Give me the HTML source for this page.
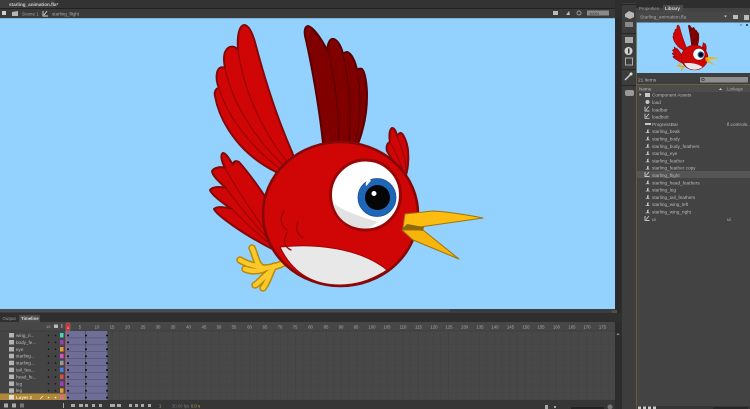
<!DOCTYPE html>
<html><head><meta charset="utf-8"><style>
html,body{margin:0;padding:0;background:#2e2e2e;width:750px;height:409px;overflow:hidden}
svg{display:block;filter:blur(.35px)}
text{font-family:"Liberation Sans",sans-serif}
</style></head><body>
<svg width="750" height="409" viewBox="0 0 750 409" xmlns="http://www.w3.org/2000/svg">
<defs>
<pattern id="tg" x="66" y="331" width="15.3" height="6.9" patternUnits="userSpaceOnUse">
<rect width="15.3" height="6.9" fill="#484848"/>
<path d="M0 0V7" stroke="#3f3f3f" stroke-width="1"/>
<path d="M7.6 0V7" stroke="#444" stroke-width="1"/>
<path d="M0 6.6H16" stroke="#444" stroke-width=".6"/>
</pattern>
</defs>

<!-- chrome -->
<rect width="750" height="409" fill="#2e2e2e"/>
<rect x="0" y="0" width="615" height="8" fill="#333"/>
<rect x="0" y="8" width="615" height="1" fill="#222"/>
<rect x="0" y="0" width="55" height="8" fill="#3d3d3d"/>
<text x="9" y="6" font-size="4.6" font-weight="bold" fill="#cfcfcf">starling_animation.fla*</text>
<rect x="0" y="9" width="615" height="9" fill="#3a3a3a"/>
<rect x="2" y="11" width="4" height="4" fill="#cfcfcf"/>
<path d="M12 16V12l6-1v5z" fill="#b5b5b5"/>
<text x="22" y="15.500" font-size="4.6" fill="#aaa">Scene 1</text>
<path d="M43 11v5h5M44 15l3-4" stroke="#ccc" stroke-width="1" fill="none"/>
<text x="52" y="15.500" font-size="4.6" fill="#aaa">starling_flight</text>
<path d="M553 11h5v4h-5z" fill="#bbb"/><path d="M566 15l3-4 1 4z" fill="#bbb"/><circle cx="579" cy="13" r="2" fill="none" stroke="#999"/>
<rect x="587" y="10.500" width="22" height="5" fill="#8a8a8a"/>
<text x="589" y="15" font-size="4" fill="#333">100%</text>

<!-- stage -->
<rect x="0" y="18" width="615" height="291" fill="#93d1ff"/>
<rect x="0" y="18" width="615" height="1" fill="#7fb5dd"/>
<rect x="0" y="309" width="615" height="4" fill="#3a3d40"/>
<rect x="0" y="309" width="450" height="3" fill="#4a4d50"/>
<rect x="615" y="18" width="6" height="295" fill="#2a2a2a"/>
<rect x="612" y="310" width="5" height="4" fill="#5a4a3a"/>

<!-- BIRD -->
<g stroke-linejoin="round" stroke-linecap="round">
<!-- dark wing -->
<path d="M308 26C304 27 304 33 306 40C311 62 319 105 323 143L358 144C364 128 367 112 367 96C367 84 365 72 362 69C360 68 358 69 357 70C355 60 351 53 347 52C345 52 344 53 343 54C341 45 336 38 332 39C329 40 328 44 327 50C321 38 313 27 308 26Z" fill="#800000" stroke="#5a0000" stroke-width="2"/>
<path d="M328 50C334 75 339 110 339 143M343 54C349 80 352 115 349 143M357 70C361 90 361 120 355 143" fill="none" stroke="#5a0000" stroke-width="1.200"/>
<!-- left wing -->
<path d="M244 25C239 26 237 36 238 50C235 46 231 46 228 48C224 51 223 58 225 68C221 66 218 68 217 73C216 78 217 84 219 88C216 88 214 92 215 96C218 113 227 130 240 145C250 156 262 165 276 172L300 176L292 152C278 120 265 80 256 46C253 34 249 25 244 25Z" fill="#d00505" stroke="#850808" stroke-width="2"/>
<path d="M238 50C243 90 265 140 298 174M225 68C232 105 262 150 294 174M219 88C228 120 258 155 288 174" fill="none" stroke="#980606" stroke-width="1.200"/>
<!-- tail -->
<path d="M223 153C220 155 221 160 225 168C220 166 214 168 212 171C212 175 218 181 226 188C220 186 212 187 210 190C211 194 222 203 232 209C226 207 217 206 214 209C216 214 240 233 278 252L266 198C258 186 248 172 239 162C235 160 233 162 233 165C230 160 226 153 223 153Z" fill="#d00505" stroke="#850808" stroke-width="2"/>
<path d="M225 168C236 188 254 215 272 240M226 188C238 205 255 225 274 245M232 209C245 222 258 235 276 249" fill="none" stroke="#980606" stroke-width="1.200"/>
<!-- crest -->
<path d="M392 128C389 130 389 137 390 142C387 143 386 147 387 151L404 180C408 172 409 160 408 150C407 142 403 132 400 133C398 134 398 135 397 136C396 131 394 128 392 128Z" fill="#d00505" stroke="#850808" stroke-width="2"/>
<path d="M390 142C396 152 401 164 404 175M397 136C402 148 406 160 406 170" fill="none" stroke="#980606" stroke-width="1.100"/>
<!-- foot -->
<g fill="none">
<g stroke="#b88a08" stroke-width="7.500">
<path d="M286 262C277 267 268 268 262 268"/>
<path d="M262 268C256 264 256 256 252 248"/>
<path d="M260 266C252 266 245 263 240 260"/>
<path d="M264 269C256 272 250 271 245 269"/>
<path d="M274 266C270 272 268 282 263 288"/>
<path d="M270 272C264 276 258 284 255 285"/>
</g>
<g stroke="#fcc92a" stroke-width="4.500">
<path d="M286 262C277 267 268 268 262 268"/>
<path d="M262 268C256 264 256 256 252 248"/>
<path d="M260 266C252 266 245 263 240 260"/>
<path d="M264 269C256 272 250 271 245 269"/>
<path d="M274 266C270 272 268 282 263 288"/>
<path d="M270 272C264 276 258 284 255 285"/>
</g>
</g>
<!-- body -->
<ellipse cx="340.500" cy="214" rx="77.500" ry="72" fill="#d00505" stroke="#850808" stroke-width="2.600"/>
<!-- belly -->
<path d="M280 247C315 243 360 248 387 270C372 280 356 285 340 285C312 285 292 272 280 247Z" fill="#e8e8e8" stroke="#9c0505" stroke-width="1"/>
<!-- body feather marks -->
<path d="M284 211C279 218 281 226 287 230M298 222C295 228 297 235 303 238M287 233C283 240 284 247 291 250" fill="none" stroke="#980606" stroke-width="1.300"/>
<!-- eye -->
<circle cx="365.500" cy="195" r="35" fill="#fff" stroke="#980606" stroke-width="3"/>
<path d="M333 203C345 212 362 217 378 222C372 226 368 229 363 228C348 228 336 218 333 203Z" fill="#e2e2e2"/>
<circle cx="377" cy="197.500" r="19" fill="#1e66b8" stroke="#174f94" stroke-width=".8"/>
<circle cx="377.500" cy="197.500" r="12.500" fill="#060606"/>
<circle cx="374" cy="193.500" r="2.500" fill="#fff"/>
<path d="M370 179C367 180 365 182 366 186C368 185 369 182 371 181Z" fill="#fff"/>
<!-- beak -->
<path d="M402 230L413 240L459 259L423 230Z" fill="#f6b40c" stroke="#9c7506" stroke-width="1"/>
<path d="M405 214L433 211C450 212 468 215 483 218L420 227L403 228Z" fill="#fdbd10" stroke="#9c7506" stroke-width="1"/>
<path d="M402 229L407 224C413 225 418 226 424 227L423 231C416 229 409 229 402 230Z" fill="#8e6a06"/>
</g>

<!-- icon column -->
<rect x="621" y="0" width="129" height="409" fill="#2e2e2e"/>
<rect x="622" y="3" width="14" height="406" fill="#3d3d3d"/>
<rect x="622" y="4" width="14" height="1" fill="#262626"/>
<path d="M625 14l4-3 5 2v4l-4 2-5-2z" fill="#b8b8b8"/>
<rect x="625" y="22" width="8" height="5" fill="#888"/>
<rect x="622" y="33" width="14" height="1" fill="#262626"/>
<rect x="625" y="37" width="8" height="6" fill="#aaa"/>
<circle cx="628.500" cy="51" r="4" fill="#d4d4d4"/><rect x="628" y="48.500" width="1.500" height="5" fill="#333"/>
<rect x="625.500" y="58" width="7" height="7" fill="none" stroke="#aaa"/>
<rect x="622" y="69" width="14" height="1" fill="#262626"/>
<path d="M625 80l7-7" stroke="#ccc" stroke-width="1.500"/><circle cx="631" cy="74" r="1.500" fill="#ddd"/>
<rect x="622" y="85" width="14" height="1" fill="#262626"/>
<rect x="625" y="90" width="9" height="6" rx="2" fill="#999"/>

<!-- right panel -->
<rect x="636" y="3" width="114" height="406" fill="#434343"/>
<rect x="636" y="3" width="114" height="5" fill="#2e2e2e"/>
<text x="639" y="10" font-size="4.400" fill="#999">Properties</text>
<rect x="663" y="5" width="20" height="7" fill="#4a4a4a"/>
<text x="665" y="10" font-size="4.400" font-weight="bold" fill="#ddd">Library</text>
<rect x="636" y="12" width="114" height="10" fill="#474747"/>
<text x="640" y="18.500" font-size="4.800" fill="#aaa">Starling_animation.fla</text>
<path d="M724 15.500h3l-1.500 2z" fill="#bbb"/><rect x="733" y="15" width="5" height="4" fill="#bbb"/><rect x="744" y="15" width="5" height="5" fill="#bbb"/>
<rect x="636" y="22.500" width="114" height="50.500" fill="#93d1ff"/>

<!-- mini bird -->
<g transform="translate(636 20.700) scale(.172)" stroke-linejoin="round">
<path d="M308 26C304 27 304 33 306 40C311 62 319 105 323 143L358 144C367 112 367 84 362 69L357 70C355 60 351 53 343 54C341 45 336 38 332 39C329 40 328 44 327 50C321 38 313 27 308 26Z" fill="#800000" stroke="#4d0000" stroke-width="3"/>
<path d="M244 25C239 26 237 36 238 50C231 46 223 51 225 68C218 66 215 78 219 88C214 88 214 92 215 96C218 113 227 130 240 145C250 156 262 165 276 172L300 176L292 152C278 120 265 80 256 46C253 34 249 25 244 25Z" fill="#d00505" stroke="#7a0808" stroke-width="3"/>
<path d="M223 153C220 155 221 160 225 168C220 166 214 168 212 171C212 175 218 181 226 188C220 186 212 187 210 190C211 194 222 203 232 209C226 207 217 206 214 209C216 214 240 233 278 252L266 198C258 186 248 172 239 162C235 160 233 162 233 165C230 160 226 153 223 153Z" fill="#d00505" stroke="#7a0808" stroke-width="3"/>
<path d="M392 128C389 130 389 137 390 142C387 143 386 147 387 151L404 180C408 172 409 160 408 150C407 142 403 132 400 133C398 134 398 135 397 136C396 131 394 128 392 128Z" fill="#d00505" stroke="#7a0808" stroke-width="3"/>
<path d="M286 262C277 267 268 268 262 268M262 268C256 264 256 256 252 247M260 266C252 266 245 263 239 260M274 266C270 272 268 282 263 290" fill="none" stroke="#e0ad1a" stroke-width="8"/>
<ellipse cx="340.500" cy="214" rx="77.500" ry="72" fill="#d00505" stroke="#7a0808" stroke-width="3"/>
<path d="M280 247C315 243 360 248 387 270C372 280 356 285 340 285C312 285 292 272 280 247Z" fill="#e8e8e8"/>
<circle cx="365.500" cy="195" r="35" fill="#fff" stroke="#8e0606" stroke-width="4"/>
<circle cx="377" cy="197.500" r="19" fill="#1e66b8"/><circle cx="377.500" cy="197.500" r="12.500" fill="#060606"/>
<path d="M405 214L433 211C450 212 468 215 483 218L420 227L403 228Z" fill="#f6b40c"/>
<path d="M402 230L413 240L459 259L423 230Z" fill="#f0ae0c"/>
</g>
<circle cx="741" cy="25" r="1" fill="#6b93b5"/><circle cx="747" cy="25" r="1" fill="#222"/>

<rect x="636" y="73" width="114" height="11" fill="#3e3e3e"/>
<text x="638" y="81.500" font-size="4.800" fill="#bbb">21 items</text>
<rect x="700" y="77" width="48" height="5.500" fill="#8e8e8e"/>
<circle cx="703" cy="79.500" r="1.300" fill="none" stroke="#333" stroke-width=".6"/>
<rect x="636" y="84" width="114" height="1" fill="#6d6240"/>
<rect x="636" y="85" width="114" height="7" fill="#4c4c4c"/>
<text x="639" y="90.500" font-size="4.600" fill="#bbb">Name</text>
<path d="M719 90l1.500-2 1.500 2z" fill="#ccc"/>
<text x="727" y="90.500" font-size="4.600" fill="#aaa">Linkage</text>
<rect x="636" y="22" width=".8" height="387" fill="#6e6238"/>

<rect x="637" y="171" width="113" height="7" fill="#555"/>
<g font-size="4.700" fill="#b9b9b9">
<text x="652" y="96.500">Component Assets</text>
<text x="652" y="104">load</text>
<text x="652" y="111.300">loadbar</text>
<text x="652" y="118.600">loadbutt</text>
<text x="652" y="125.900">ProgressBar</text>
<text x="727" y="125.900">fl.controls...</text>
<text x="652" y="133.200">starling_beak</text>
<text x="652" y="140.500">starling_body</text>
<text x="652" y="147.800">starling_body_feathers</text>
<text x="652" y="155.100">starling_eye</text>
<text x="652" y="162.400">starling_feather</text>
<text x="652" y="169.700">starling_feather copy</text>
<text x="652" y="177">starling_flight</text>
<text x="652" y="184.300">starling_head_feathers</text>
<text x="652" y="191.600">starling_leg</text>
<text x="652" y="198.900">starling_tail_feathers</text>
<text x="652" y="206.200">starling_wing_left</text>
<text x="652" y="213.500">starling_wing_right</text>
<text x="652" y="220.800">ui</text>
<text x="727" y="220.800">ui</text>
</g>
<g fill="#c6c6c6">
<path d="M639.500 93l2 1.500-2 1.500z"/>
<rect x="645" y="93" width="5" height="4"/>
<circle cx="647.500" cy="102" r="2"/>
<path d="M645 106.500v4.500h4.500M646 110l3-3.500M645 113.800v4.500h4.500M646 117.300l3-3.500" fill="none" stroke="#c6c6c6" stroke-width=".9"/>
<rect x="645" y="123" width="6" height="2"/>
<path d="M645 133l2-1v-2l1.500-1v3l1.500 1z"/>
<path d="M645 140.300l2-1v-2l1.500-1v3l1.500 1z"/>
<path d="M645 147.600l2-1v-2l1.500-1v3l1.500 1z"/>
<path d="M645 154.900l2-1v-2l1.500-1v3l1.500 1z"/>
<path d="M645 162.200l2-1v-2l1.500-1v3l1.500 1z"/>
<path d="M645 169.500l2-1v-2l1.500-1v3l1.500 1z"/>
<path d="M645 172v4.500h4.500M646 175.500l3-3.500" fill="none" stroke="#c6c6c6" stroke-width=".9"/>
<path d="M645 184.100l2-1v-2l1.500-1v3l1.500 1z"/>
<path d="M645 191.400l2-1v-2l1.500-1v3l1.500 1z"/>
<path d="M645 198.700l2-1v-2l1.500-1v3l1.500 1z"/>
<path d="M645 206l2-1v-2l1.500-1v3l1.500 1z"/>
<path d="M645 213.300l2-1v-2l1.500-1v3l1.500 1z"/>
<path d="M645 216v4.500h4.500M646 219.500l3-3.500" fill="none" stroke="#c6c6c6" stroke-width=".9"/>
</g>
<!-- panel bottom icons -->
<rect x="637" y="406" width="113" height="3" fill="#363636"/>
<g fill="#ccc"><rect x="638" y="406.500" width="3" height="2.500"/><rect x="643" y="406.500" width="3" height="2.500"/><rect x="648" y="406.500" width="3" height="2.500"/><rect x="653" y="406.500" width="3" height="2.500"/></g>
<rect x="713" y="407" width="35" height="2" fill="#262626"/>

<!-- timeline -->
<rect x="0" y="313" width="621" height="96" fill="#3a3a3a"/>
<rect x="0" y="313" width="621" height="9" fill="#2f2f2f"/>
<text x="2.500" y="320" font-size="4.400" fill="#999">Output</text>
<rect x="19" y="315" width="21" height="7" fill="#4a4a4a"/>
<text x="21" y="320" font-size="4.400" font-weight="bold" fill="#ddd">Timeline</text>
<rect x="0" y="322" width="615" height="9" fill="#474747"/>
<rect x="0" y="331" width="66" height="69" fill="#444"/>
<rect x="66" y="331" width="549" height="69" fill="url(#tg)"/>
<rect x="0" y="330.600" width="615" height=".7" fill="#3a3a3a"/>
<rect x="615" y="322" width="6" height="87" fill="#2c2c2c"/>
<path d="M616.500 335h3l-1.500-2z" fill="#999"/>

<!-- ruler -->
<g font-size="4.300" fill="#aaa" text-anchor="middle">
<text x="80" y="328.500">5</text><text x="97" y="328.500">10</text><text x="112" y="328.500">15</text><text x="127.500" y="328.500">20</text><text x="143" y="328.500">25</text><text x="158" y="328.500">30</text><text x="173" y="328.500">35</text><text x="188.500" y="328.500">40</text><text x="204" y="328.500">45</text><text x="219" y="328.500">50</text><text x="234" y="328.500">55</text><text x="249.500" y="328.500">60</text><text x="265" y="328.500">65</text><text x="280" y="328.500">70</text><text x="295" y="328.500">75</text><text x="310.500" y="328.500">80</text><text x="326" y="328.500">85</text><text x="341" y="328.500">90</text><text x="356" y="328.500">95</text><text x="372" y="328.500">100</text><text x="387" y="328.500">105</text><text x="403" y="328.500">110</text><text x="418.500" y="328.500">115</text><text x="434" y="328.500">120</text><text x="449" y="328.500">125</text><text x="464.500" y="328.500">130</text><text x="480" y="328.500">135</text><text x="495" y="328.500">140</text><text x="510.500" y="328.500">145</text><text x="526" y="328.500">150</text><text x="541" y="328.500">155</text><text x="556.500" y="328.500">160</text><text x="572" y="328.500">165</text><text x="587" y="328.500">170</text><text x="602.500" y="328.500">175</text>
</g>
<text x="46" y="328" font-size="4" fill="#aaa">15</text>
<rect x="54" y="324.500" width="4" height="3.500" fill="#bbb"/>
<rect x="61" y="324" width="1.500" height="4" fill="#888"/>
<rect x="66" y="323" width="4" height="8" rx="1" fill="#b33" stroke="#d66" stroke-width=".5"/>
<text x="68" y="329" font-size="4" fill="#fff" text-anchor="middle">1</text>

<!-- frames -->
<rect x="66" y="331" width="42" height="69" fill="#6f6e98"/>
<g stroke="#55556a" stroke-width=".7">
<path d="M66 337.900H108M66 344.800H108M66 351.700H108M66 358.600H108M66 365.500H108M66 372.400H108M66 379.300H108M66 386.200H108M66 393.100H108"/>
</g>
<path d="M66 331V400" stroke="#a76d8e" stroke-width="1.200"/>
<path d="M85.500 331V400M107.500 331V400" stroke="#4b4b60" stroke-width=".8"/>
<g fill="#0c0c0c">
<circle cx="68" cy="335.500" r="1"/><circle cx="86" cy="335.500" r="1"/><circle cx="107" cy="335.500" r="1"/>
<circle cx="68" cy="342.400" r="1"/><circle cx="86" cy="342.400" r="1"/><circle cx="107" cy="342.400" r="1"/>
<circle cx="68" cy="349.300" r="1"/><circle cx="86" cy="349.300" r="1"/><circle cx="107" cy="349.300" r="1"/>
<circle cx="68" cy="356.200" r="1"/><circle cx="86" cy="356.200" r="1"/><circle cx="107" cy="356.200" r="1"/>
<circle cx="68" cy="363.100" r="1"/><circle cx="86" cy="363.100" r="1"/><circle cx="107" cy="363.100" r="1"/>
<circle cx="68" cy="370" r="1"/><circle cx="86" cy="370" r="1"/><circle cx="107" cy="370" r="1"/>
<circle cx="68" cy="376.900" r="1"/><circle cx="86" cy="376.900" r="1"/><circle cx="107" cy="376.900" r="1"/>
<circle cx="68" cy="383.800" r="1"/><circle cx="86" cy="383.800" r="1"/><circle cx="107" cy="383.800" r="1"/>
<circle cx="68" cy="390.700" r="1"/><circle cx="86" cy="390.700" r="1"/><circle cx="107" cy="390.700" r="1"/>
<circle cx="68" cy="397.600" r="1"/><circle cx="86" cy="397.600" r="1"/><circle cx="107" cy="397.600" r="1"/>
</g>

<!-- layers -->
<rect x="0" y="393.500" width="66" height="7" fill="#b0883a"/>
<g fill="#b4b4b4">
<rect x="9" y="333" width="5" height="4.500"/><rect x="9" y="340" width="5" height="4.500"/><rect x="9" y="347" width="5" height="4.500"/><rect x="9" y="353.800" width="5" height="4.500"/><rect x="9" y="360.700" width="5" height="4.500"/><rect x="9" y="367.600" width="5" height="4.500"/><rect x="9" y="374.500" width="5" height="4.500"/><rect x="9" y="381.400" width="5" height="4.500"/><rect x="9" y="388.300" width="5" height="4.500"/><rect x="9" y="395" width="5" height="4.500" fill="#ddd"/>
</g>
<g font-size="4.600" fill="#bdbdbd">
<text x="16" y="337">wing_ri...</text>
<text x="16" y="344">body_fe...</text>
<text x="16" y="350.800">eye</text>
<text x="16" y="357.700">starling...</text>
<text x="16" y="364.600">starling...</text>
<text x="16" y="371.500">tail_fea...</text>
<text x="16" y="378.400">head_fe...</text>
<text x="16" y="385.300">leg</text>
<text x="16" y="392.200">leg</text>
<text x="16" y="399" fill="#f1e4c0" font-weight="bold">Layer 2</text>
</g>
<path d="M40 399l3-3" stroke="#eee" stroke-width=".8"/>
<g fill="#141414">
<circle cx="48.500" cy="335.500" r=".8"/><circle cx="55.500" cy="335.500" r=".8"/>
<circle cx="48.500" cy="342.400" r=".8"/><circle cx="55.500" cy="342.400" r=".8"/>
<circle cx="48.500" cy="349.300" r=".8"/><circle cx="55.500" cy="349.300" r=".8"/>
<circle cx="48.500" cy="356.200" r=".8"/><circle cx="55.500" cy="356.200" r=".8"/>
<circle cx="48.500" cy="363.100" r=".8"/><circle cx="55.500" cy="363.100" r=".8"/>
<circle cx="48.500" cy="370" r=".8"/><circle cx="55.500" cy="370" r=".8"/>
<circle cx="48.500" cy="376.900" r=".8"/><circle cx="55.500" cy="376.900" r=".8"/>
<circle cx="48.500" cy="383.800" r=".8"/><circle cx="55.500" cy="383.800" r=".8"/>
<circle cx="48.500" cy="390.700" r=".8"/><circle cx="55.500" cy="390.700" r=".8"/>
<circle cx="48.500" cy="397.600" r=".8" fill="#eee"/><circle cx="55.500" cy="397.600" r=".8" fill="#eee"/>
</g>
<rect x="60" y="333" width="3.500" height="4.500" fill="#41d8b8"/>
<rect x="60" y="340" width="3.500" height="4.500" fill="#9a3fc0"/>
<rect x="60" y="347" width="3.500" height="4.500" fill="#e89a30"/>
<rect x="60" y="353.800" width="3.500" height="4.500" fill="#d84fd0"/>
<rect x="60" y="360.700" width="3.500" height="4.500" fill="#9a9a9a"/>
<rect x="60" y="367.600" width="3.500" height="4.500" fill="#4d7fe0"/>
<rect x="60" y="374.500" width="3.500" height="4.500" fill="#d84f4f"/>
<rect x="60" y="381.400" width="3.500" height="4.500" fill="#9a3fc0"/>
<rect x="60" y="388.300" width="3.500" height="4.500" fill="#e89a30"/>
<rect x="60" y="395" width="3.500" height="4.500" fill="#d8709a"/>

<!-- bottom bar -->
<rect x="0" y="400" width="615" height="9" fill="#363636"/>
<g fill="#aaa">
<rect x="4" y="403.500" width="4" height="4"/><rect x="12" y="403.500" width="4" height="4"/><rect x="20" y="403.500" width="4" height="4" fill="#777"/>
<rect x="63" y="403" width="1" height="5"/>
<rect x="71" y="404" width="4" height="3"/><rect x="79" y="404" width="4" height="3"/><rect x="85" y="404" width="3" height="3"/><rect x="92" y="404" width="3" height="3"/><rect x="99" y="404" width="3" height="3"/>
<rect x="110" y="404" width="5" height="3"/><rect x="117" y="404" width="4" height="3"/>
<rect x="129" y="404" width="3" height="3"/><rect x="135" y="404" width="3" height="3"/><rect x="141" y="404" width="3" height="3"/><rect x="148" y="404" width="3" height="3"/>
<rect x="545" y="405" width="3" height="4"/><rect x="554" y="406" width="2" height="2"/><circle cx="610" cy="407" r="2.500" fill="#777"/>
</g>
<rect x="571" y="407" width="33" height="2" fill="#222"/>
<text x="159" y="407.500" font-size="4.200" fill="#c7a03f">1</text>
<text x="172" y="407.500" font-size="4.200" fill="#777">30.00 fps</text>
<text x="191" y="407.500" font-size="4.200" fill="#c7a03f">0.0 s</text>
</svg>
</body></html>
